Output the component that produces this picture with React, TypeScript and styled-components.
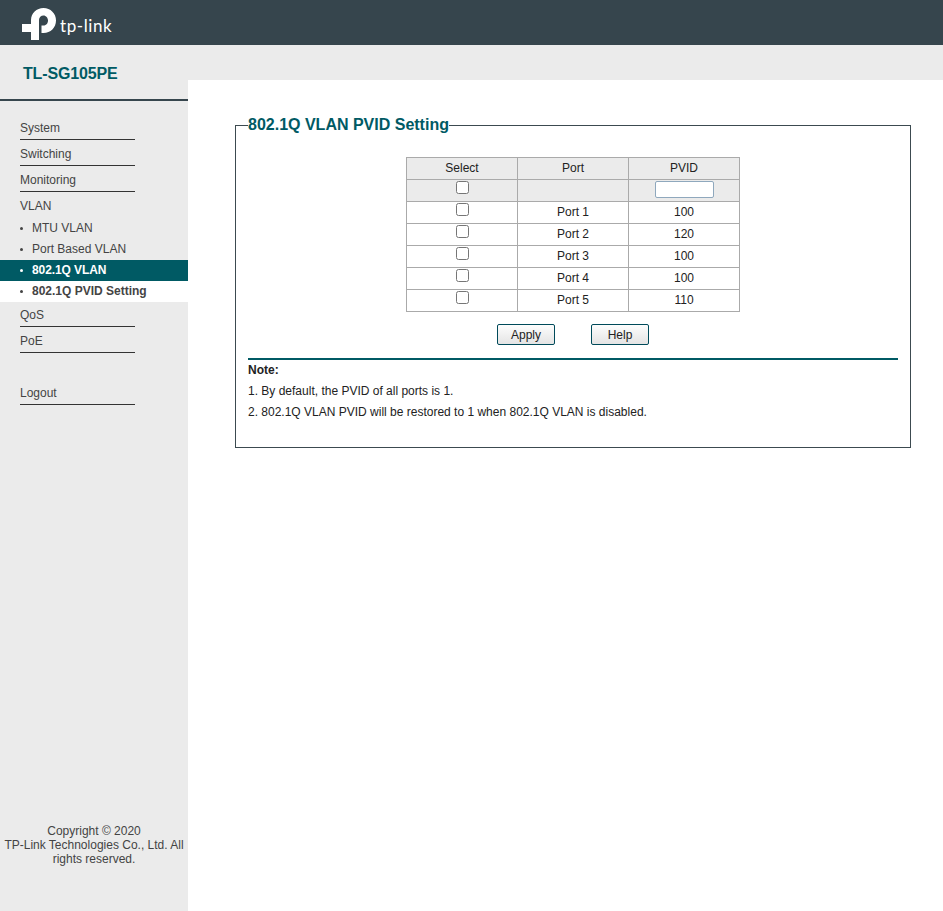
import React from 'react';
import styled, { createGlobalStyle } from 'styled-components';

const GlobalStyle = createGlobalStyle`
  html, body {
    margin: 0;
    padding: 0;
    background: #fff;
    font-family: "Liberation Sans", Arial, sans-serif;
    font-size: 12px;
    color: #333;
  }
`;

const Page = styled.div`
  display: flex;
  flex-direction: column;
  height: 911px;
  overflow: hidden;
`;

const Header = styled.header`
  height: 45px;
  flex: none;
  background: #36454d;
  display: flex;
  align-items: flex-start;
  padding-left: 22px;
  box-sizing: border-box;
`;

const LogoMark = styled.svg`
  width: 35px;
  height: 34px;
  margin-top: 7px;
  flex: none;
`;

const LogoText = styled.span`
  font-family: Lato, "Open Sans", sans-serif;
  font-weight: 400;
  font-size: 17px;
  letter-spacing: 0.6px;
  line-height: 20px;
  margin: 16px 0 0 3px;
  color: #fff;
`;

const Body = styled.div`
  flex: 1;
  display: flex;
  min-height: 0;
`;

const Sidebar = styled.aside`
  width: 188px;
  flex: none;
  background: #ebebeb;
  display: flex;
  flex-direction: column;
`;

const Model = styled.div`
  height: 56px;
  padding: 20px 0 0 23px;
  box-sizing: border-box;
  border-bottom: 2px solid #36454d;
  font-size: 16px;
  line-height: 18px;
  font-weight: bold;
  letter-spacing: -0.15px;
  color: #005a64;
`;

const NavList = styled.nav`
  padding-top: 13px;
  display: flex;
  flex-direction: column;
`;

const NavItem = styled.a<{ $gapBefore?: boolean; $noLine?: boolean }>`
  display: block;
  width: 115px;
  margin-left: 20px;
  margin-top: ${(p) => (p.$gapBefore ? '26px' : '0')};
  height: 26px;
  box-sizing: border-box;
  padding-top: 7px;
  line-height: 14px;
  color: #444;
  border-bottom: ${(p) => (p.$noLine ? 'none' : '1px solid #333')};
`;

const SubItem = styled.a<{ $state?: 'active' | 'current' }>`
  display: block;
  height: 21px;
  line-height: 21px;
  padding-left: 32px;
  position: relative;
  font-weight: ${(p) => (p.$state ? 'bold' : 'normal')};
  letter-spacing: ${(p) => (p.$state === 'active' ? '-0.1px' : '0')};
  color: ${(p) => (p.$state === 'active' ? '#fff' : '#444')};
  background: ${(p) =>
    p.$state === 'active' ? '#005a64' : p.$state === 'current' ? '#fff' : 'transparent'};

  &::before {
    content: '';
    position: absolute;
    left: 20px;
    top: 9px;
    width: 3px;
    height: 3px;
    border-radius: 50%;
    background: ${(p) => (p.$state === 'active' ? '#fff' : '#444')};
  }
`;

const SubGroup = styled.div`
  display: flex;
  flex-direction: column;
  margin-bottom: -1px;
`;

const Copyright = styled.div`
  margin-top: auto;
  margin-bottom: 45px;
  padding: 0 3px;
  text-align: center;
  line-height: 14px;
  color: #444;
`;

const Main = styled.main`
  flex: 1;
  display: flex;
  flex-direction: column;
`;

const TopStrip = styled.div`
  height: 35px;
  flex: none;
  background: #ebebeb;
`;

const Panel = styled.fieldset`
  width: 676px;
  height: 332px;
  box-sizing: border-box;
  margin: 36px 0 0 47px;
  padding: 0 12px;
  border: 1px solid #3c4a50;
  min-width: 0;
`;

const PanelTitle = styled.legend`
  padding: 0;
  font-size: 16px;
  line-height: 18px;
  font-weight: bold;
  color: #005a64;
`;

const PortTable = styled.table`
  border-collapse: collapse;
  width: 334px;
  margin: 23px auto 0;
  table-layout: fixed;
  color: #222;

  th, td {
    border: 1px solid #aaa;
    height: 22px;
    box-sizing: border-box;
    padding: 0 0 2px;
    text-align: center;
    font-weight: normal;
    line-height: 14px;
  }
`;

const GrayRow = styled.tr`
  background: #ebebeb;
`;

const SelectBox = styled.input.attrs({ type: 'checkbox' })`
  display: block;
  width: 13px;
  height: 13px;
  margin: 0 auto 5px;
`;

const PvidInput = styled.input`
  display: block;
  width: 59px;
  height: 17px;
  box-sizing: border-box;
  margin: 0 auto;
  padding: 0;
  background: #fff;
  border: 1px solid #8fa8bd;
  border-radius: 2px;
`;

const ButtonRow = styled.div`
  display: flex;
  justify-content: center;
  gap: 36px;
  margin-top: 12px;
`;

const ActionButton = styled.button`
  width: 58px;
  height: 21px;
  padding: 0;
  font-family: inherit;
  font-size: 12px;
  color: #222;
  background: linear-gradient(#fdfdfd, #e4e4e4);
  border: 1px solid #004a5a;
  border-radius: 2px;
`;

const NoteBlock = styled.div`
  margin-top: 13px;
  border-top: 2px solid #005a64;
  padding-top: 2px;
  color: #222;
`;

const NoteTitle = styled.div`
  font-weight: bold;
  line-height: 16px;
`;

const NoteLine = styled.div`
  margin-top: 5px;
  line-height: 16px;
`;

const ports = [
  { name: 'Port 1', pvid: 100 },
  { name: 'Port 2', pvid: 120 },
  { name: 'Port 3', pvid: 100 },
  { name: 'Port 4', pvid: 100 },
  { name: 'Port 5', pvid: 110 },
];

const App = () => {
  return (
    <Page>
      <GlobalStyle />
      <Header>
        <LogoMark viewBox="0 0 35 34" aria-hidden="true">
          <path
            fill="#fff"
            d="M9 17V13C9 6 14.5 1 21.5 1C28.5 1 34 6.5 34 13.5C34 20.5 28.5 26 21.5 26H19.5V18.5H21.5C24.5 18.5 26 16 26 13.5C26 11 24 8.5 21.5 8.5C19 8.5 17 10.5 17 13V33H9V25H0V17Z"
          />
        </LogoMark>
        <LogoText>tp-link</LogoText>
      </Header>
      <Body>
        <Sidebar>
          <Model>TL-SG105PE</Model>
          <NavList>
            <NavItem>System</NavItem>
            <NavItem>Switching</NavItem>
            <NavItem>Monitoring</NavItem>
            <NavItem $noLine>VLAN</NavItem>
            <SubGroup>
              <SubItem>MTU VLAN</SubItem>
              <SubItem>Port Based VLAN</SubItem>
              <SubItem $state="active">802.1Q VLAN</SubItem>
              <SubItem $state="current">802.1Q PVID Setting</SubItem>
            </SubGroup>
            <NavItem>QoS</NavItem>
            <NavItem>PoE</NavItem>
            <NavItem $gapBefore>Logout</NavItem>
          </NavList>
          <Copyright>
            Copyright © 2020
            <br />
            TP-Link Technologies Co., Ltd. All rights reserved.
          </Copyright>
        </Sidebar>
        <Main>
          <TopStrip />
          <Panel>
            <PanelTitle>802.1Q VLAN PVID Setting</PanelTitle>
            <PortTable>
              <thead>
                <GrayRow>
                  <th>Select</th>
                  <th>Port</th>
                  <th>PVID</th>
                </GrayRow>
              </thead>
              <tbody>
                <GrayRow>
                  <td>
                    <SelectBox />
                  </td>
                  <td />
                  <td>
                    <PvidInput />
                  </td>
                </GrayRow>
                {ports.map((port) => (
                  <tr key={port.name}>
                    <td>
                      <SelectBox />
                    </td>
                    <td>{port.name}</td>
                    <td>{port.pvid}</td>
                  </tr>
                ))}
              </tbody>
            </PortTable>
            <ButtonRow>
              <ActionButton>Apply</ActionButton>
              <ActionButton>Help</ActionButton>
            </ButtonRow>
            <NoteBlock>
              <NoteTitle>Note:</NoteTitle>
              <NoteLine>1. By default, the PVID of all ports is 1.</NoteLine>
              <NoteLine>2. 802.1Q VLAN PVID will be restored to 1 when 802.1Q VLAN is disabled.</NoteLine>
            </NoteBlock>
          </Panel>
        </Main>
      </Body>
    </Page>
  );
};

export default App;
